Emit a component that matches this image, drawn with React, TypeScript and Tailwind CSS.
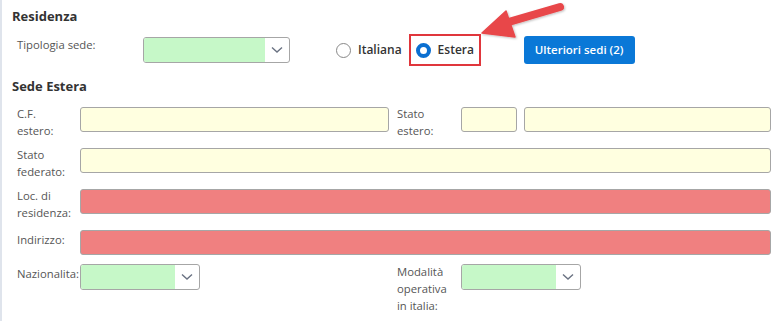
import React from "react";

const font = { fontFamily: '"Segoe UI", "Open Sans", "Noto Sans", sans-serif' };

function Chevron() {
  return (
    <svg width="12" height="8" viewBox="0 0 12 8" className="text-gray-500">
      <path d="M1 1.5 L6 6 L11 1.5" fill="none" stroke="currentColor" strokeWidth="1.4" />
    </svg>
  );
}

function Select({ w }: { w: string }) {
  return (
    <div className={`flex h-[26px] ${w} overflow-hidden rounded-[3px] border border-[#a6a6a6] bg-white`}>
      <div className="flex-1 bg-[#c6f8c8]" />
      <div className="flex w-[24px] items-center justify-center">
        <Chevron />
      </div>
    </div>
  );
}

function Input({ color, cls = "flex-1" }: { color: "y" | "r"; cls?: string }) {
  const bg = color === "y" ? "bg-[#ffffe0]" : "bg-[#f08080]";
  return <div className={`h-[25px] ${cls} rounded-[3px] border border-[#a6a6a6] ${bg}`} />;
}

function Label({ children, w = "w-[63px]" }: { children: React.ReactNode; w?: string }) {
  return <div className={`${w} mt-[-3px] shrink-0 text-[11.3px] leading-[17px] text-[#555]`}>{children}</div>;
}

export default function App() {
  return (
    <div className="relative h-[321px] w-[783px] overflow-hidden border-l-2 border-[#dfe4ec] bg-white" style={font}>
      <div className="pl-[10px] pr-[12px] pt-[6px]">
        <div className="text-[13px] font-bold leading-[20px] text-[#333]">Residenza</div>
        <div className="mt-[10px] flex h-[28px] items-center">
          <div className="w-[131px] self-start pl-[5px] pt-[1px] text-[11.3px] text-[#555]">Tipologia sede:</div>
          <Select w="w-[147px]" />
          <div className="ml-[46px] flex items-center">
            <span className="h-[15px] w-[15px] rounded-full border border-[#888] bg-white" />
            <span className="ml-[7px] text-[12px] font-semibold text-[#333]">Italiana</span>
          </div>
          <div className="ml-[7px] flex h-[32px] w-[72px] items-center border-2 border-[#e0363c] pl-[5px]">
            <span className="h-[15px] w-[15px] rounded-full border-[4px] border-[#0a6fd1] bg-white" />
            <span className="ml-[7px] text-[12px] font-semibold text-[#333]">Estera</span>
          </div>
          <div className="ml-[43px] flex h-[28px] w-[111px] items-center justify-center rounded-[3px] bg-[#0a78d7] text-[11.5px] font-semibold text-white">
            Ulteriori sedi (2)
          </div>
        </div>
        <div className="mt-[12px] text-[13px] font-bold leading-[20px] text-[#333]">Sede Estera</div>
        <div className="mt-[12px] flex flex-col pl-[5px]">
          <div className="flex h-[41px] items-start">
            <Label>C.F.<br />estero:</Label>
            <Input color="y" cls="w-[309px] mt-[-1px]" />
            <div className="ml-[8px]"><Label w="w-[64px]">Stato<br />estero:</Label></div>
            <Input color="y" cls="w-[56px] mt-[-1px]" />
            <Input color="y" cls="ml-[7px] flex-1 mt-[-1px]" />
          </div>
          <div className="flex h-[41px] items-start">
            <Label>Stato<br />federato:</Label>
            <Input color="y" cls="flex-1 mt-[-1px]" />
          </div>
          <div className="flex h-[41px] items-start">
            <Label>Loc. di<br />residenza:</Label>
            <Input color="r" cls="flex-1 mt-[-1px]" />
          </div>
          <div className="flex h-[33px] items-start">
            <div className="w-[63px] shrink-0 pt-[0px] text-[11.3px] leading-[17px] text-[#555]">Indirizzo:</div>
            <Input color="r" cls="flex-1 mt-[-1px]" />
          </div>
          <div className="flex items-start">
            <div className="w-[63px] shrink-0 pt-[1px] text-[11.3px] leading-[17px] text-[#555]">Nazionalita:</div>
            <Select w="w-[120px]" />
            <div className="ml-[197px] pt-[2px]"><Label w="w-[64px]">Modalità<br />operativa<br />in italia:</Label></div>
            <Select w="w-[120px]" />
          </div>
        </div>
      </div>
      <svg className="pointer-events-none absolute left-0 top-0" width="783" height="321">
        <defs>
          <filter id="sh" x="-20%" y="-20%" width="140%" height="140%">
            <feDropShadow dx="1" dy="1" stdDeviation="1" floodColor="#000" floodOpacity="0.25" />
          </filter>
        </defs>
        <g filter="url(#sh)" fill="#e8474a" stroke="#e8474a">
          <line x1="558" y1="7" x2="500" y2="24" strokeWidth="8" strokeLinecap="round" />
          <polygon points="480,33 504,11 513,37" strokeWidth="1.5" strokeLinejoin="round" />
        </g>
      </svg>
    </div>
  );
}
